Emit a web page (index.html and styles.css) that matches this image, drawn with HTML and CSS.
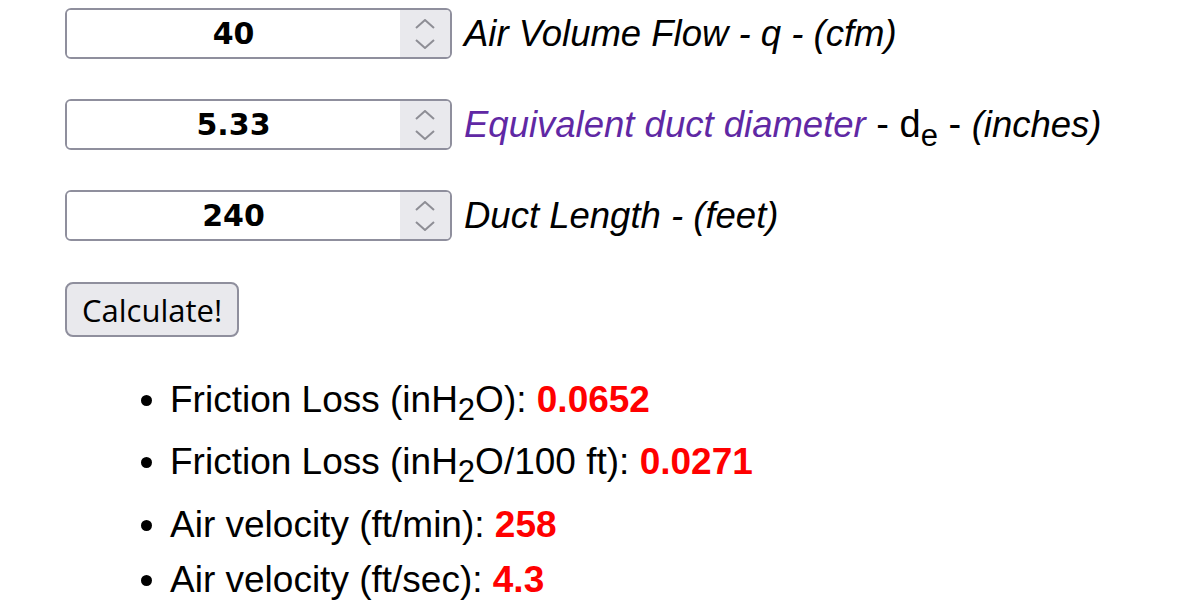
FILE: index.html
```html
<!DOCTYPE html>
<html>
<head>
	<meta charset="UTF-8">
	<title>Duct Friction Loss</title>
	<link rel="stylesheet" href="styles.css">
</head>
<body>
	<form class="calc">
		<div class="row">
			<div class="field">
				<input type="text" id="flow" value="40">
				<span class="spin">
					<svg width="20" height="30" viewBox="0 0 20 30"><polyline points="1,9 10,1 19,9"/><polyline points="1,21 10,29 19,21"/></svg>
				</span>
			</div>
			<label for="flow"><i>Air Volume Flow - q - (cfm)</i></label>
		</div>
		<div class="row">
			<div class="field">
				<input type="text" id="diameter" value="5.33">
				<span class="spin">
					<svg width="20" height="30" viewBox="0 0 20 30"><polyline points="1,9 10,1 19,9"/><polyline points="1,21 10,29 19,21"/></svg>
				</span>
			</div>
			<label for="diameter"><i><a href="#">Equivalent duct diameter</a></i><span class="upright"> - d<sub>e</sub> - </span><i>(inches)</i></label>
		</div>
		<div class="row">
			<div class="field">
				<input type="text" id="length" value="240">
				<span class="spin">
					<svg width="20" height="30" viewBox="0 0 20 30"><polyline points="1,9 10,1 19,9"/><polyline points="1,21 10,29 19,21"/></svg>
				</span>
			</div>
			<label for="length"><i>Duct Length - (feet)</i></label>
		</div>
		<button type="button">Calculate!</button>
	</form>
	<ul class="results">
		<li>Friction Loss (inH<sub>2</sub>O): <b>0.0652</b></li>
		<li>Friction Loss (inH<sub>2</sub>O/100 ft): <b>0.0271</b></li>
		<li>Air velocity (ft/min): <b>258</b></li>
		<li>Air velocity (ft/sec): <b>4.3</b></li>
	</ul>
</body>
</html>
```

FILE: styles.css
```css
body {
	margin: 0;
	padding: 8px 0 0 65px;
	font-family: "Liberation Sans", Arial, sans-serif;
	font-size: 36px;
	color: #000;
	background: #fff;
}
.calc {
	margin: 0;
}
.row {
	display: flex;
	align-items: center;
	gap: 12px;
	margin-bottom: 40px;
}
.field {
	display: flex;
	width: 387px;
	height: 51px;
	box-sizing: border-box;
	border: 2px solid #8f8f9d;
	border-radius: 6px;
	overflow: hidden;
}
.field input {
	flex: 1;
	min-width: 0;
	border: none;
	outline: none;
	padding: 0;
	font-family: "DejaVu Sans", Verdana, sans-serif;
	font-weight: bold;
	font-size: 30px;
	color: #000;
	text-align: center;
}
.spin {
	width: 50px;
	display: flex;
	align-items: center;
	justify-content: center;
	background-color: #e9e9ed;
}
.spin polyline {
	fill: none;
	stroke: #8e8e95;
	stroke-width: 2;
}
label {
	font-size: 36.5px;
	line-height: 42px;
}
label sub {
	font-size: 31px;
	line-height: 0;
	vertical-align: -9px;
}
label a {
	color: #6028a4;
	text-decoration: none;
}
.upright {
	font-size: 38px;
}
button {
	display: block;
	margin-top: 41px;
	height: 55px;
	padding: 0 15px;
	background-color: #e9e9ed;
	border: 2px solid #8f8f9d;
	border-radius: 8px;
	font-family: "Open Sans", "Noto Sans", sans-serif;
	font-size: 31px;
	color: #000;
}
.results {
	margin: 42px 0 0;
	padding-left: 105px;
	font-size: 37px;
}
.results li {
	margin-bottom: 13px;
}
.results sub {
	font-size: 31px;
}
.results b {
	color: #ff0000;
}
```
